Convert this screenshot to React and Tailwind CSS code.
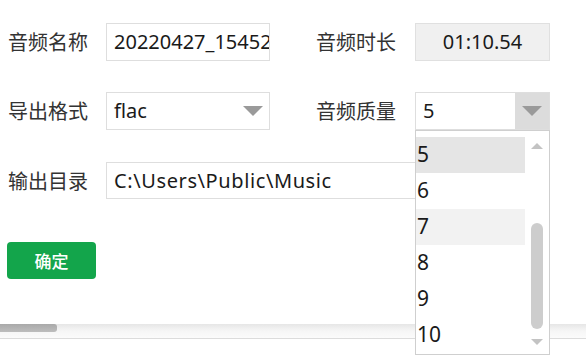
import React from 'react';

const font = { fontFamily: '"Noto Sans", "Open Sans", "Noto Sans CJK SC", sans-serif' };

function Arrow() {
    return (
        <svg width="20" height="10" viewBox="0 0 20 10">
            <path d="M0 0 L20 0 L10 10 Z" fill="#9a9a9a" />
        </svg>
    );
}

function Label({ children, left }) {
    return (
        <div
            className={`${left ? 'w-[106px] pl-[8px]' : 'w-[99px]'} text-[20px] text-[#333] leading-none [font-family:'Noto_Sans_CJK_SC',sans-serif]`}
        >
            {children}
        </div>
    );
}

export default function App() {
    const items = ['5', '6', '7', '8', '9', '10'];

    return (
        <div className="w-[586px] h-[356px] bg-white overflow-hidden relative text-[#1a1a1a]" style={font}>
            <div className="flex flex-col pt-[22px]">
                {/* row 1 */}
                <div className="flex items-center h-[39px]">
                    <Label left>音频名称</Label>
                    <div className="w-[164px] h-[38px] mt-[1px] border border-[#dedede] overflow-hidden whitespace-nowrap pl-[7px] flex items-center text-[20px]">
                        20220427_154521
                    </div>
                    <div className="w-[46px]" />
                    <Label>音频时长</Label>
                    <div className="w-[135px] h-[38px] bg-[#f0f0f0] border border-[#e0e0e0] flex items-center justify-center text-[20px]">
                        01:10.54
                    </div>
                </div>

                {/* row 2 */}
                <div className="flex items-center h-[38px] mt-[31px]">
                    <Label left>导出格式</Label>
                    <div className="w-[164px] h-[38px] border border-[#dedede] pl-[7px] pr-[6px] flex items-center justify-between text-[20px]">
                        <span>flac</span>
                        <Arrow />
                    </div>
                    <div className="w-[46px]" />
                    <Label>音频质量</Label>
                    <div className="relative w-[135px] h-[38px] border border-[#dedede] flex items-center text-[20px]">
                        <span className="flex-1 pl-[7px]">5</span>
                        <div className="w-[34px] h-full bg-[#dcdcdc] flex items-center justify-center">
                            <Arrow />
                        </div>

                        {/* open list */}
                        <div className="absolute left-[-1px] top-[37px] w-[135px] h-[225px] bg-white border border-[#cfcfcf] z-10 flex">
                            <div className="flex-1 pt-[6px]">
                                {items.map((n) => (
                                    <div
                                        key={n}
                                        className={`h-[36px] flex items-center pl-[1px] text-[21px] ${n === '5' ? 'bg-[#e5e5e5]' : n === '7' ? 'bg-[#f2f2f2]' : ''}`}
                                    >
                                        {n}
                                    </div>
                                ))}
                            </div>
                            <div className="w-[24px] relative">
                                <svg width="12" height="6" viewBox="0 0 12 6" className="absolute left-[6px] top-[12px]">
                                    <path d="M0 6 L12 6 L6 0 Z" fill="#c3c3c3" />
                                </svg>
                                <div className="absolute left-[6px] top-[92px] w-[12px] h-[106px] rounded-full bg-[#cdcdcd]" />
                                <svg width="12" height="6" viewBox="0 0 12 6" className="absolute left-[6px] top-[208px]">
                                    <path d="M0 0 L12 0 L6 6 Z" fill="#c3c3c3" />
                                </svg>
                            </div>
                        </div>
                    </div>
                </div>

                {/* row 3 */}
                <div className="flex items-center h-[37px] mt-[32px]">
                    <Label left>输出目录</Label>
                    <div className="w-[443px] h-[37px] border border-[#dedede] pl-[7px] flex items-center text-[20px] tracking-[0.6px] whitespace-nowrap">
                        C:\Users\Public\Music
                    </div>
                </div>

                <div className="pl-[7px] mt-[43px]">
                    <button className="w-[89px] h-[37px] rounded-[4px] bg-[#13a54b] text-white text-[17px] font-medium [font-family:'Noto_Sans_CJK_SC',sans-serif]">
                        确定
                    </button>
                </div>

                {/* horizontal scrollbar */}
                <div className="mt-[45px] h-[15px] relative bg-gradient-to-b from-[#e6e6e6] via-[#f6f6f6] to-[#fbfbfb] border-b border-[#dcdcdc]">
                    <div className="absolute left-0 top-0 h-[8px] w-[57px] rounded-r-[3px] bg-gradient-to-b from-[#a9a9a9] to-[#bdbdbd]" />
                </div>
            </div>
        </div>
    );
}
